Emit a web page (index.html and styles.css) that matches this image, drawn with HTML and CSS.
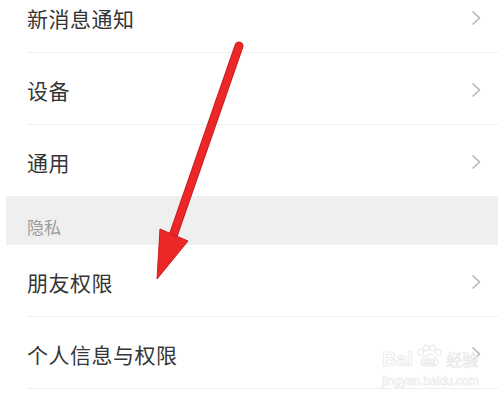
FILE: index.html
```html
<!DOCTYPE html>
<html lang="zh-CN">
<head>
    <meta charset="UTF-8">
    <meta name="viewport" content="width=device-width, initial-scale=1.0">
    <title>设置</title>
    <link rel="stylesheet" href="styles.css">
</head>
<body>
    <div class="page">
        <ul class="list first">
            <li class="item">
                <span>新消息通知</span>
                <svg class="chev" viewBox="0 0 10 16"><polyline points="1.5,1.5 8.5,8 1.5,14.5"/></svg>
            </li>
            <li class="item">
                <span>设备</span>
                <svg class="chev" viewBox="0 0 10 16"><polyline points="1.5,1.5 8.5,8 1.5,14.5"/></svg>
            </li>
            <li class="item last">
                <span>通用</span>
                <svg class="chev" viewBox="0 0 10 16"><polyline points="1.5,1.5 8.5,8 1.5,14.5"/></svg>
            </li>
        </ul>
        <div class="section">隐私</div>
        <ul class="list">
            <li class="item">
                <span>朋友权限</span>
                <svg class="chev" viewBox="0 0 10 16"><polyline points="1.5,1.5 8.5,8 1.5,14.5"/></svg>
            </li>
            <li class="item">
                <span>个人信息与权限</span>
                <svg class="chev" viewBox="0 0 10 16"><polyline points="1.5,1.5 8.5,8 1.5,14.5"/></svg>
            </li>
        </ul>

        <!-- annotation arrow drawn over the list -->
        <svg class="arrow" viewBox="0 0 498 404">
            <line x1="239" y1="46" x2="173" y2="236" stroke="#c91d1d" stroke-width="9" stroke-linecap="round"/>
            <line x1="239" y1="46" x2="173" y2="236" stroke="#ec2727" stroke-width="7" stroke-linecap="round"/>
            <polygon points="160,229 188,241 157,279" fill="#ec2727" stroke="#c91d1d" stroke-width="1" stroke-linejoin="round"/>
        </svg>

        <div class="mark">
            <div class="mark-top">
                <span>Bai</span>
                <span class="paw">
                    <svg viewBox="0 0 30 24">
                        <ellipse cx="6" cy="8" rx="3" ry="3.5"/>
                        <ellipse cx="12" cy="3.5" rx="3" ry="3.2"/>
                        <ellipse cx="19" cy="3.5" rx="3" ry="3.2"/>
                        <ellipse cx="25" cy="8" rx="3" ry="3.5"/>
                        <path d="M6 20 Q8 11 15.5 10 Q23 11 25 20 Q25 23 15.5 23 Q6 23 6 20 Z"/>
                    </svg>
                    <em>du</em>
                </span>
                <span class="cn">经验</span>
            </div>
            <div class="mark-url">jingyan.baidu.com</div>
        </div>
    </div>
</body>
</html>
```

FILE: styles.css
```css
body {
    margin: 0;
    background: #ffffff;
    font-family: "Noto Sans CJK SC", "Noto Sans", sans-serif;
    color: #353535;
}
.page {
    position: relative;
    width: 498px;
    height: 404px;
    overflow: hidden;
}
.list {
    list-style: none;
    margin: 0;
    padding: 0 0 0 27px;
}
.list.first {
    margin-top: -19px;
}
.item {
    display: flex;
    align-items: center;
    justify-content: space-between;
    padding: 2px 17px 0 0;
    box-sizing: border-box;
    height: 72px;
    border-bottom: 1px solid #efefef;
    font-size: 21px;
    letter-spacing: 0.5px;
}
.item.last {
    border-bottom: none;
    height: 71px;
}
.chev {
    width: 10px;
    height: 16px;
    fill: none;
    stroke: #b4b4b4;
    stroke-width: 1.5;
}
.section {
    margin-left: 6px;
    height: 49px;
    background: #efefef;
    color: #9b9b9b;
    font-size: 17px;
    padding: 18px 0 0 21px;
    box-sizing: border-box;
}
.arrow {
    position: absolute;
    left: 0;
    top: 0;
    width: 498px;
    height: 404px;
}
.mark {
    position: absolute;
    left: 382px;
    top: 344px;
    color: #ffffff;
    -webkit-text-stroke: 0.7px #e6e6e6;
    font-family: "Liberation Sans", sans-serif;
}
.mark-top {
    display: flex;
    align-items: flex-end;
    font-size: 20px;
    font-weight: bold;
    line-height: 22px;
}
.paw {
    position: relative;
    width: 28px;
    height: 26px;
    margin: 0 3px 0 2px;
}
.paw svg {
    width: 28px;
    height: 24px;
    fill: #ffffff;
    stroke: #e3e3e3;
    stroke-width: 1;
}
.paw em {
    position: absolute;
    left: 7px;
    top: 11px;
    font-style: normal;
    font-size: 11px;
    line-height: 12px;
}
.cn {
    font-family: "Noto Sans CJK SC", sans-serif;
    font-size: 16px;
    font-weight: normal;
}
.mark-url {
    font-size: 12px;
    line-height: 14px;
    margin-top: 4px;
    -webkit-text-stroke: 0.5px #e6e6e6;
}
```
